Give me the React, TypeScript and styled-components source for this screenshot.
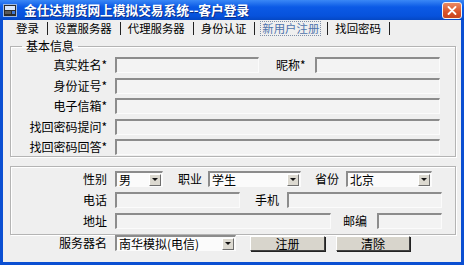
import React from "react";
import { styled, createGlobalStyle } from "styled-components";

const GlobalStyle = createGlobalStyle`
  html, body {
    margin: 0;
    padding: 0;
    background: #ffffff;
  }
  body {
    font-family: "Noto Sans CJK SC", "Liberation Sans", sans-serif;
    font-size: 12px;
    color: #000;
  }
`;

const Window = styled.div`
  width: 464px;
  height: 265px;
  display: flex;
  flex-direction: column;
  background: #0b4fd2;
`;

const TitleBar = styled.div`
  height: 20px;
  flex: none;
  display: flex;
  align-items: center;
  padding: 0 2px 0 3px;
  background: linear-gradient(#3a88f6, #0b5ae6 35%, #0752dc 80%, #0548c4);
`;

const TitleText = styled.span`
  margin-left: 7px;
  color: #ffffff;
  font-weight: bold;
  font-size: 12.7px;
  text-shadow: 1px 1px 0 #0a2f8a;
  line-height: 20px;
`;

const CloseButton = styled.div`
  margin-left: auto;
  width: 18px;
  height: 15px;
  border: 1px solid #f4f4f4;
  border-radius: 3px;
  background: linear-gradient(#ea8a64, #d9532a 60%, #c7441e);
  display: flex;
  align-items: center;
  justify-content: center;
`;

const Body = styled.div`
  flex: 1;
  margin: 0 3px 3px 3px;
  background: #efefef;
  display: flex;
  flex-direction: column;
`;

const TabBar = styled.div`
  height: 17px;
  display: flex;
  align-items: center;
  padding-left: 11px;
  font-size: 11.4px;
`;

const Tab = styled.span<{ $active?: boolean }>`
  padding: 0 1px;
  line-height: 13px;
  white-space: nowrap;
  color: ${(p) => (p.$active ? "#4f74ad" : "#000")};
  border: 1px dotted ${(p) => (p.$active ? "#7f8fa8" : "transparent")};
`;

const Sep = styled.span`
  width: 1px;
  height: 13px;
  background: #222;
  margin: 0 5px 0 6px;
`;

const GroupBox = styled.fieldset`
  margin: 2px 5px 0 7px;
  padding: 4px 0 1px 0;
  border: 1px solid #b4b4b4;
  box-shadow: inset 1px 1px 0 #ffffff, 1px 1px 0 #ffffff;
  min-width: 0;
  display: flex;
  flex-direction: column;
  gap: 4.5px;
`;

const Legend = styled.legend`
  margin-left: 11px;
  padding: 0 4px;
  line-height: 14px;
  font-size: 12px;
`;

const PlainGroup = styled.div`
  margin: 9px 5px 0 7px;
  padding: 4px 0 5px 0;
  border: 1px solid #b4b4b4;
  box-shadow: inset 1px 1px 0 #ffffff, 1px 1px 0 #ffffff;
  display: flex;
  flex-direction: column;
  gap: 5px;
`;

const Row = styled.div`
  height: 16px;
  display: flex;
  align-items: center;
`;

const Label = styled.span<{ $w?: number; $ml?: number; $gap?: number }>`
  width: ${(p) => (p.$w ? `${p.$w}px` : "auto")};
  margin-left: ${(p) => p.$ml ?? 0}px;
  margin-right: ${(p) => p.$gap ?? 8}px;
  text-align: right;
  white-space: nowrap;
  line-height: 16px;
`;

const Field = styled.div<{ $w: number }>`
  width: ${(p) => p.$w}px;
  height: 16px;
  box-sizing: border-box;
  background: #f3f3f3;
  border-top: 2px solid #8c8c8c;
  border-left: 2px solid #8c8c8c;
  border-right: 1px solid #fbfbfb;
  border-bottom: 1px solid #fbfbfb;
`;

const SelectBox = styled.div<{ $w: number }>`
  width: ${(p) => p.$w}px;
  height: 16px;
  box-sizing: border-box;
  background: #fbfbfb;
  border-top: 2px solid #8c8c8c;
  border-left: 2px solid #8c8c8c;
  border-right: 1px solid #fbfbfb;
  border-bottom: 1px solid #fbfbfb;
  display: flex;
  align-items: center;
  padding-left: 2px;
  padding-right: 1px;
`;

const SelectText = styled.span`
  flex: 1;
  white-space: nowrap;
  line-height: 12px;
`;

const DropButton = styled.span`
  width: 12px;
  height: 12px;
  box-sizing: border-box;
  background: #dcd9d0;
  border-top: 1px solid #ffffff;
  border-left: 1px solid #ffffff;
  border-right: 1px solid #6e6e6e;
  border-bottom: 1px solid #6e6e6e;
  display: flex;
  align-items: center;
  justify-content: center;
`;

const Arrow = styled.span`
  width: 0;
  height: 0;
  border-left: 3px solid transparent;
  border-right: 3px solid transparent;
  border-top: 3px solid #111;
`;

const BottomRow = styled.div`
  margin-top: 0;
  height: 16px;
  display: flex;
  align-items: center;
  padding-left: 8px;
`;

const Button = styled.div<{ $w: number; $ml: number }>`
  width: ${(p) => p.$w}px;
  height: 15px;
  margin-left: ${(p) => p.$ml}px;
  box-sizing: border-box;
  background: #d8d5cc;
  border-top: 1px solid #ffffff;
  border-left: 1px solid #ffffff;
  border-right: 1px solid #404040;
  border-bottom: 1px solid #404040;
  box-shadow: 1px 1px 0 #222;
  display: flex;
  align-items: center;
  justify-content: center;
  line-height: 13px;
`;

function Select({ w, value }: { w: number; value: string }) {
  return (
    <SelectBox $w={w}>
      <SelectText>{value}</SelectText>
      <DropButton>
        <Arrow />
      </DropButton>
    </SelectBox>
  );
}

function AppIcon() {
  return (
    <svg width="14" height="13" viewBox="0 0 14 13">
      <rect x="0.5" y="0.5" width="13" height="12" fill="#2b2b2b" stroke="#9fb8e0" />
      <rect x="2" y="2" width="10" height="4" fill="#d8e6fa" />
      <rect x="2" y="7" width="6" height="3" fill="#5a5a5a" />
      <rect x="9" y="7" width="3" height="3" fill="#3e78d8" />
    </svg>
  );
}

export default function App() {
  const tabs = ["登录", "设置服务器", "代理服务器", "身份认证"];
  return (
    <>
      <GlobalStyle />
      <Window>
        <TitleBar>
          <AppIcon />
          <TitleText>金仕达期货网上模拟交易系统--客户登录</TitleText>
          <CloseButton>
            <svg width="10" height="9" viewBox="0 0 10 9">
              <path d="M1.5 1 L8.5 8 M8.5 1 L1.5 8" stroke="#ffffff" strokeWidth="1.8" strokeLinecap="round" />
            </svg>
          </CloseButton>
        </TitleBar>
        <Body>
          <TabBar>
            {tabs.map((t) => (
              <React.Fragment key={t}>
                <Tab>{t}</Tab>
                <Sep />
              </React.Fragment>
            ))}
            <Tab $active>新用户注册</Tab>
            <Sep />
            <Tab>找回密码</Tab>
            <Sep />
          </TabBar>

          <GroupBox>
            <Legend>基本信息</Legend>
            <Row>
              <Label $w={96}>真实姓名*</Label>
              <Field $w={144} />
              <Label $ml={17} $gap={9}>昵称*</Label>
              <Field $w={125} />
            </Row>
            <Row>
              <Label $w={96}>身份证号*</Label>
              <Field $w={325} />
            </Row>
            <Row>
              <Label $w={96}>电子信箱*</Label>
              <Field $w={325} />
            </Row>
            <Row>
              <Label $w={96}>找回密码提问*</Label>
              <Field $w={325} />
            </Row>
            <Row>
              <Label $w={96}>找回密码回答*</Label>
              <Field $w={325} />
            </Row>
          </GroupBox>

          <PlainGroup>
            <Row>
              <Label $w={96}>性别</Label>
              <Select w={48} value="男" />
              <Label $ml={15} $gap={6}>职业</Label>
              <Select w={93} value="学生" />
              <Label $ml={14} $gap={7}>省份</Label>
              <Select w={86} value="北京" />
            </Row>
            <Row>
              <Label $w={96}>电话</Label>
              <Field $w={125} />
              <Label $ml={15}>手机</Label>
              <Field $w={155} />
            </Row>
            <Row>
              <Label $w={96}>地址</Label>
              <Field $w={216} />
              <Label $ml={12} $gap={10}>邮编</Label>
              <Field $w={65} />
            </Row>
          </PlainGroup>

          <BottomRow>
            <Label $w={96}>服务器名</Label>
            <Select w={121} value="南华模拟(电信)" />
            <Button $w={75} $ml={14}>注册</Button>
            <Button $w={74} $ml={11}>清除</Button>
          </BottomRow>
        </Body>
      </Window>
    </>
  );
}
